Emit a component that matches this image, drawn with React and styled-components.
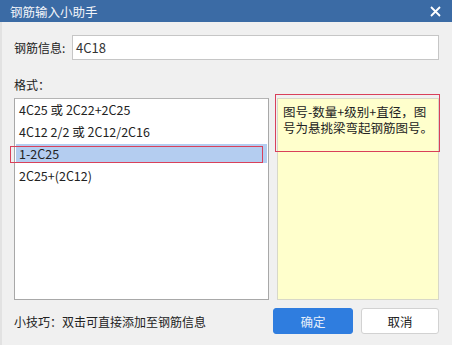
import styled, { createGlobalStyle } from "styled-components";

const GlobalStyle = createGlobalStyle`
  html, body {
    margin: 0;
    padding: 0;
    background: #f0f0f0;
  }
  * { box-sizing: border-box; }
`

const font = `"Noto Sans CJK SC", "Noto Sans", sans-serif`

const Window = styled.div`
  width: 452px;
  height: 345px;
  display: flex;
  flex-direction: column;
  background: #f0f0f0;
  border-left: 2px solid #e2e2e2;
  font-family: ${font};
  font-size: 12px;
  color: #222;
`

const TitleBar = styled.div`
  height: 22px;
  margin-left: -2px;
  background: #3b6ba5;
  color: #f2f5fa;
  display: flex;
  align-items: center;
  justify-content: space-between;
  padding: 0 10px 0 10px;
  font-size: 12.5px;
`

const Close = styled.span`
  display: flex;
  align-items: center;
  justify-content: center;
  width: 14px;
  height: 14px;
`

const Body = styled.div`
  flex: 1;
  display: flex;
  flex-direction: column;
  padding: 13px 13px 0 12px;
`

const InfoRow = styled.div`
  display: flex;
  align-items: center;
  height: 25px;
`

const Label = styled.span`
  width: 58px;
  color: #222;
`

const Input = styled.div`
  flex: 1;
  height: 25px;
  border: 1px solid #c6c6c6;
  background: #fff;
  display: flex;
  align-items: center;
  padding-left: 3px;
  font-size: 13px;
  color: #333;
`

const SectionLabel = styled.div`
  margin-top: 17px;
  line-height: 16px;
  height: 16px;
`

const Panels = styled.div`
  display: flex;
  gap: 8px;
  margin-top: 5px;
  height: 202px;
`

const List = styled.div`
  width: 255px;
  border: 1px solid #a8a8a8;
  border-top-color: #b4b4b4;
  background: #fff;
  display: flex;
  flex-direction: column;
`

const Item = styled.div`
  position: relative;
  height: 19px;
  margin: 1px 1px 2px;
  padding-left: 3px;
  line-height: 19px;
  font-size: 12.5px;
  background: ${(p) => (p.$selected ? "#b4cdf0" : "transparent")};
`

const Mark = styled.div`
  position: absolute;
  left: ${(p) => p.$left}px;
  top: ${(p) => p.$top}px;
  width: ${(p) => p.$width}px;
  height: ${(p) => p.$height}px;
  border: 1px solid #d9405a;
  pointer-events: none;
`

const Note = styled.div`
  position: relative;
  width: 162px;
  background: #ffffcc;
  border: 1px solid #d8d8c8;
  padding: 5px 4px 0 5px;
  line-height: 16px;
  font-size: 12.5px;
`

const Footer = styled.div`
  display: flex;
  align-items: center;
  margin-top: 8px;
  height: 26px;
`

const Tip = styled.span`
  flex: 1;
`

const Button = styled.button`
  width: ${(p) => p.$width}px;
  height: 26px;
  border-radius: 3px;
  font-family: ${font};
  font-size: 12.5px;
  margin-left: ${(p) => p.$gap || 0}px;
  border: 1px solid ${(p) => (p.$primary ? "#2f7ddf" : "#d2d2d2")};
  background: ${(p) => (p.$primary ? "#2f7ddf" : "#ffffff")};
  color: ${(p) => (p.$primary ? "#e6eef9" : "#222")};
  padding: 0;
`

const formats = [
  "4C25 或 2C22+2C25",
  "4C12 2/2 或 2C12/2C16",
  "1-2C25",
  "2C25+(2C12)",
]

export default function App() {
  return (
    <Window>
      <GlobalStyle />
      <TitleBar>
        <span>钢筋输入小助手</span>
        <Close>
          <svg width="11" height="11" viewBox="0 0 11 11">
            <path d="M1 1L10 10M10 1L1 10" stroke="#fff" strokeWidth="1.8" />
          </svg>
        </Close>
      </TitleBar>
      <Body>
        <InfoRow>
          <Label>钢筋信息:</Label>
          <Input>4C18</Input>
        </InfoRow>
        <SectionLabel>格式：</SectionLabel>
        <Panels>
          <List>
            {formats.map((f, i) => (
              <Item key={f} $selected={i === 2}>
                {f}
                {i === 2 && <Mark $left={-6} $top={2} $width={253} $height={17} />}
              </Item>
            ))}
          </List>
          <Note>
            图号-数量+级别+直径，图号为悬挑梁弯起钢筋图号。
            <Mark $left={-3} $top={-5} $width={165} $height={58} />
          </Note>
        </Panels>
        <Footer>
          <Tip>小技巧：双击可直接添加至钢筋信息</Tip>
          <Button $primary $width={80}>确定</Button>
          <Button $width={78} $gap={8}>取消</Button>
        </Footer>
      </Body>
    </Window>
  )
}
